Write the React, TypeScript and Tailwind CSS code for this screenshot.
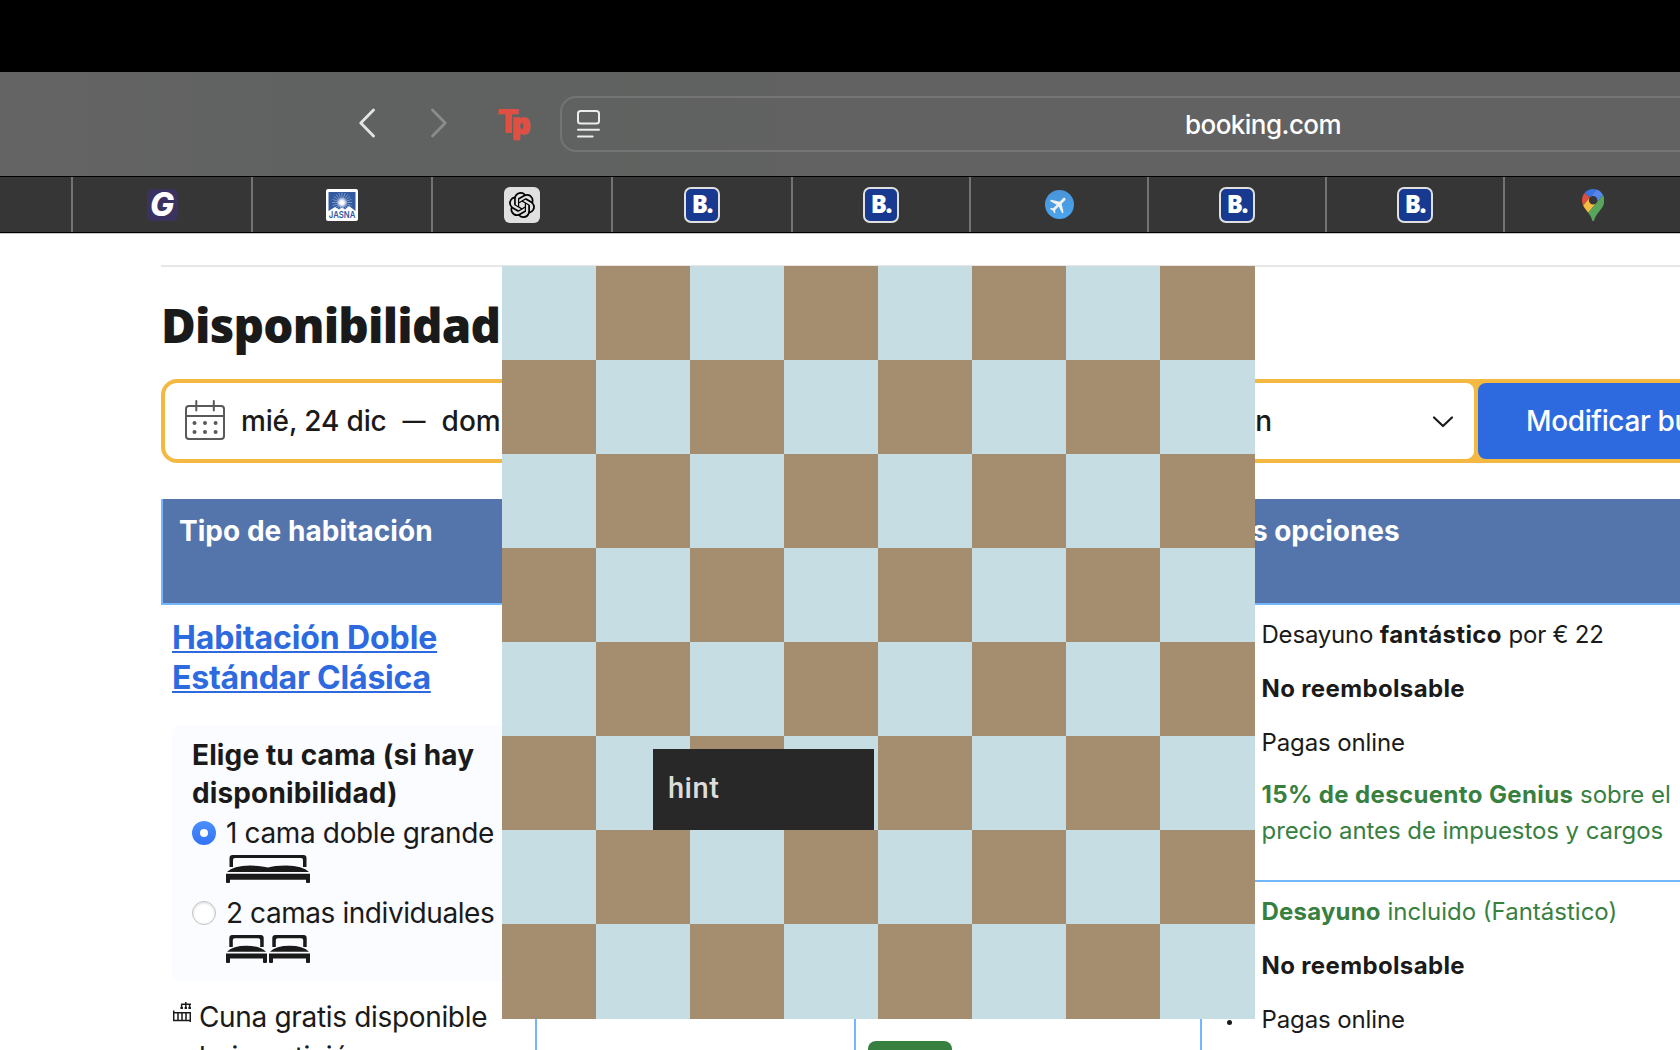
import React from "react";
import { MdFlight } from "react-icons/md";
import { SiOpenai } from "react-icons/si";

function BackArrow() {
  return (
    <svg className="mb-[2px] shrink-0" width="16" height="30" viewBox="0 0 16 30" fill="none" stroke="#e4e4e4" strokeWidth="2.8" strokeLinecap="round" strokeLinejoin="round">
      <path d="M14.5 2 L1.8 15 L14.5 28" />
    </svg>
  );
}

function ForwardArrow() {
  return (
    <svg width="16" height="30" viewBox="0 0 16 30" fill="none" stroke="#8a8b8a" strokeWidth="2.8" strokeLinecap="round" strokeLinejoin="round">
      <path d="M1.5 2 L14.2 15 L1.5 28" />
    </svg>
  );
}

function TpLogo() {
  return (
    <svg width="36" height="34" viewBox="0 0 36 34" fill="#e04f44" stroke="#e04f44" className="overflow-visible font-[Inter] font-black">
      <text x="0.4" y="25.8" fontSize="33" strokeWidth="0.2" textLength="21.5" lengthAdjust="spacingAndGlyphs">T</text>
      <text x="15.2" y="26.6" fontSize="28" strokeWidth="1.4">p</text>
    </svg>
  );
}

function ReaderIcon() {
  return (
    <svg className="shrink-0" width="23" height="28" viewBox="0 0 23 28" fill="none" stroke="#ececec" strokeWidth="2" strokeLinecap="round">
      <rect x="1" y="1" width="21" height="12.6" rx="2.6" />
      <path d="M1 19.8 H22 M1 26.4 H15.6" />
    </svg>
  );
}

function GIcon() {
  return (
    <span className="flex h-[32px] w-[31px] items-center justify-center rounded-md bg-[#3a335f]">
      <span className="font-[Inter] text-[32px] font-extrabold italic leading-none text-white">G</span>
    </span>
  );
}

function JasnaIcon() {
  const rays = Array.from({ length: 20 }, (_, i) => (i * Math.PI) / 10);
  return (
    <svg width="32" height="32" viewBox="0 0 32 32" className="overflow-visible">
      <defs>
        <radialGradient id="sun">
          <stop offset="0.3" stopColor="#ffffff" />
          <stop offset="1" stopColor="#ffffff" stopOpacity="0" />
        </radialGradient>
      </defs>
      <rect width="32" height="32" rx="2" fill="#ffffff" />
      <rect x="2.5" y="3" width="27" height="19" fill="#315aa0" />
      {rays.map((a) => (
        <line key={a} x1="16" y1="13.5" x2={16 + 10 * Math.cos(a)} y2={13.5 + 10 * Math.sin(a)} stroke="#c9d6ea" strokeWidth="0.5" />
      ))}
      <circle cx="16" cy="13.5" r="5.5" fill="url(#sun)" />
      <path d="M2.5 22 L9 18 L13 20.5 L16 18.5 L19 20.5 L23 17 L29.5 22 V30 H2.5 Z" fill="#ffffff" />
      <text x="2.8" y="28.6" fontSize="9.5" fontWeight="600" textLength="26.5" lengthAdjust="spacingAndGlyphs" fill="#315aa0" className="font-[Inter]">
        JASNA
      </text>
    </svg>
  );
}

function OpenAiIcon() {
  return (
    <span className="flex size-9 items-center justify-center rounded-md bg-[#e0e0e0] text-black">
      <SiOpenai size={26} />
    </span>
  );
}

function BookingIcon() {
  return (
    <span className="flex size-9 items-center justify-center rounded-[7px] border-2 border-[#e0e0e0] bg-[#17398f]">
      <span className="mb-[2px] font-['Open_Sans'] text-[24px] font-extrabold leading-none tracking-[-1.2px] text-white">B.</span>
    </span>
  );
}

function PlaneIcon() {
  return (
    <span className="flex size-[29px] items-center justify-center rounded-full bg-linear-to-b from-[#4a94d8] to-[#4aa5ee] text-[#f1f1f1]">
      <MdFlight size={22} className="rotate-45" />
    </span>
  );
}

function MapsIcon() {
  return (
    <svg width="22.3" height="32" viewBox="0 0 92.3 132.3">
      <path fill="#3a74e0" d="M60.2 2.2C55.8.8 51 0 46.1 0 32 0 19.3 6.4 10.8 16.5l21.8 18.3L60.2 2.2z" />
      <path fill="#db4f41" d="M10.8 16.5C4.1 24.5 0 34.9 0 46.1c0 8.7 1.7 15.7 4.6 22l28-33.3-21.8-18.3z" />
      <path fill="#5586ec" d="M46.2 28.5c9.8 0 17.7 7.9 17.7 17.7 0 4.3-1.6 8.3-4.2 11.4 0 0 13.9-16.6 27.5-32.7-5.6-10.8-15.3-19-27-22.7L32.6 34.8c3.3-3.8 8.1-6.3 13.6-6.3" />
      <path fill="#f5bd42" d="M46.2 63.8c-9.8 0-17.7-7.9-17.7-17.7 0-4.3 1.5-8.3 4.1-11.3l-28 33.3c4.8 10.6 12.8 19.2 21 29.9l34.1-40.5c-3.3 3.9-8.1 6.3-13.5 6.3" />
      <path fill="#58a55c" d="M59.1 109.2c15.4-24.1 33.3-35 33.3-63 0-7.7-1.9-14.9-5.2-21.3L25.6 98c2.6 3.4 5.3 7.3 7.9 11.3 9.4 14.5 6.8 23.1 12.8 23.1s3.4-8.7 12.8-23.2" />
    </svg>
  );
}

function CalendarIcon() {
  return (
    <svg className="mb-[2px] shrink-0" width="40" height="40" viewBox="0 0 40 40" fill="none" stroke="#595959" strokeWidth="2" strokeLinecap="round">
      <rect x="1" y="6" width="38" height="33" rx="3" />
      <path d="M1 16 H39 M11.3 1 V10.5 M28.8 1 V10.5" />
      <g fill="#595959" stroke="none">
        <circle cx="9.5" cy="23" r="2" />
        <circle cx="20" cy="23" r="2" />
        <circle cx="30.6" cy="23" r="2" />
        <circle cx="9.5" cy="32" r="2" />
        <circle cx="20" cy="32" r="2" />
        <circle cx="30.6" cy="32" r="2" />
      </g>
    </svg>
  );
}

function DoubleBed() {
  return (
    <svg width="84" height="28" viewBox="0 0 84 28" fill="#1a1a1a">
      <path d="M3.5 12 V3 Q3.5 0 6.5 0 H77.5 Q80.5 0 80.5 3 V12 H77 V5 Q77 3 75 3 H9 Q7 3 7 5 V12 Z" />
      <path d="M1 17 Q7 11 24 10.6 Q36 10.6 42 12.6 Q48 10.6 60 10.6 Q77 11 83 17 Z" />
      <path d="M0 18.7 H84 V27 Q84 28 83 28 H81 Q80 28 80 27 V24.8 H4 V27 Q4 28 3 28 H1 Q0 28 0 27 Z" />
    </svg>
  );
}

function SingleBed() {
  return (
    <svg width="41" height="28" viewBox="0 0 41 28" fill="#1a1a1a">
      <path d="M3.3 12 V3 Q3.3 0 6.3 0 H34.7 Q37.7 0 37.7 3 V12 H34.2 V5 Q34.2 3.2 32.2 3.2 H8.8 Q6.8 3.2 6.8 5 V12 Z" />
      <path d="M1 16.7 Q7 10.8 20.5 10.8 Q34 10.8 40 16.7 Z" />
      <path d="M0 18.5 H41 V27 Q41 28 40 28 H38 Q37 28 37 27 V23.6 H4 V27 Q4 28 3 28 H1 Q0 28 0 27 Z" />
    </svg>
  );
}

function CribIcon() {
  return (
    <svg width="18" height="20" viewBox="0 0 18 20" fill="none" stroke="#1a1a1a" strokeWidth="1.5">
      <path d="M0.7 8.5 V18.4 M0 10.8 H18 M0 18.4 H18 M5 11 V18 M9 11 V18 M13 11 V18 M17.3 11 V20" />
      <path d="M8 2.2 H18 M12.8 0 V6 M8.6 2.4 V5 M16.6 2.4 V5" />
      <path d="M7.4 6 H10 M11.6 6 H14 M15.4 6 H18" strokeWidth="2" />
    </svg>
  );
}

function TabCell({ children, className }: { children?: React.ReactNode; className: string }) {
  return (
    <div className={`flex shrink-0 items-center justify-center border-r-2 border-[#737373] ${className}`}>{children}</div>
  );
}

function BedOption({ label, checked, icon, tracking }: { label: string; checked: boolean; icon: React.ReactNode; tracking: string }) {
  return (
    <div className="flex h-20 gap-[10px]">
      {checked ? (
        <span className="mt-2 flex size-6 shrink-0 items-center justify-center rounded-full bg-linear-to-b from-[#4a8ffb] to-[#3273f6]">
          <span className="size-2 rounded-full bg-white" />
        </span>
      ) : (
        <span className="mt-2 size-6 shrink-0 rounded-full border border-[#c2c2c4] bg-white shadow-[inset_0_1px_3px_rgba(0,0,0,0.15)]" />
      )}
      <div className="flex flex-col">
        <span className={`whitespace-nowrap text-[28px] leading-10 ${tracking}`}>{label}</span>
        <span className="mt-[2px] flex gap-[2px]">{icon}</span>
      </div>
    </div>
  );
}

function Board() {
  const cells = Array.from({ length: 64 }, (_, i) => (Math.floor(i / 8) + (i % 8)) % 2 === 0);
  return (
    <div className="absolute left-[502px] top-[266px] grid h-[753px] w-[753px] grid-cols-[repeat(7,94px)_95px] grid-rows-[repeat(7,94px)_95px]">
      {cells.map((light, i) => (
        <div key={i} className={light ? "bg-[#c5dde3]" : "bg-[#a58e70]"} />
      ))}
      <div className="absolute left-[151px] top-[483px] flex h-[81px] w-[221px] items-center bg-[#282828] pl-[15px]">
        <span className="mb-[2px] font-[Roboto] text-[29px] font-medium leading-none tracking-[0.5px] text-[#dcdcdc]">hint</span>
      </div>
    </div>
  );
}

export default function App() {
  return (
    <div className="relative flex h-[1050px] w-[1680px] flex-col overflow-hidden bg-white font-[Inter,sans-serif] text-[#1a1a1a]">
      <div className="h-[72px] shrink-0 bg-black" />

      <div className="flex h-[104px] shrink-0 items-center bg-linear-to-r from-[#646464] via-[#5f6260] via-25% to-[#626262] to-60% pl-[359px]">
        <BackArrow />
        <span className="mb-[2px] ml-14 shrink-0">
          <ForwardArrow />
        </span>
        <span className="ml-[50px] shrink-0">
          <TpLogo />
        </span>
        <div className="ml-[27px] flex h-14 w-[1400px] shrink-0 items-center rounded-2xl border-2 border-[#747474] pl-[15px]">
          <ReaderIcon />
          <span className="ml-[585px] mt-[2px] text-[26px] font-medium leading-8 tracking-[-0.54px] text-white">booking.com</span>
        </div>
      </div>

      <div className="flex h-[57px] shrink-0 border-y border-black bg-[#363636]">
        <TabCell className="w-[73px]" />
        <TabCell className="w-[180px]"><GIcon /></TabCell>
        <TabCell className="w-[180px]"><JasnaIcon /></TabCell>
        <TabCell className="w-[180px]"><OpenAiIcon /></TabCell>
        <TabCell className="w-[180px]"><BookingIcon /></TabCell>
        <TabCell className="w-[178px]"><BookingIcon /></TabCell>
        <TabCell className="w-[178px]"><PlaneIcon /></TabCell>
        <TabCell className="w-[178px]"><BookingIcon /></TabCell>
        <TabCell className="w-[178px]"><BookingIcon /></TabCell>
        <TabCell className="w-[178px]"><MapsIcon /></TabCell>
      </div>

      <main className="flex w-[1700px] flex-1 flex-col border-t border-[#c9c9c9] pl-[161px] pt-[31px]">
        <div className="h-[2px] shrink-0 bg-[#e7e7e7]" />
        <h1 className="mt-[30px] font-['Open_Sans'] text-[47.5px] font-extrabold leading-[56px] tracking-[-0.8px]">Disponibilidad</h1>

        <div className="mt-[26px] flex h-[84px] w-[1700px] shrink-0 gap-1 rounded-2xl bg-[#f4b942] p-1 text-[28px] font-medium leading-9">
          <div className="flex w-[620px] shrink-0 items-center rounded-l-xl rounded-r-lg bg-white pl-5">
            <CalendarIcon />
            <span className="ml-[16px] tracking-[-0.15px]">mié, 24 dic</span>
            <span className="ml-[16px] text-[23px]">—</span>
            <span className="ml-[16px]">dom, 28 dic</span>
          </div>
          <div className="flex w-[685px] shrink-0 items-center justify-end rounded-lg bg-white pr-[20px]">
            <span>2 adultos · 0 niños · 1 habitación</span>
            <svg className="ml-[160px] mt-[2px]" width="22" height="14" viewBox="0 0 22 14" fill="none" stroke="#1a1a1a" strokeWidth="2.2" strokeLinecap="round" strokeLinejoin="round">
              <path d="M2 2.5 L11 11 L20 2.5" />
            </svg>
          </div>
          <button className="flex w-[360px] shrink-0 items-center rounded-lg bg-[#2d6adf] pl-[48px] tracking-[-0.37px] text-white">
            Modificar búsqueda
          </button>
        </div>

        <div className="mt-9 flex h-[106px] shrink-0 border-b-2 border-l-2 border-[#74b6ff] bg-[#5475ac] pt-[14px] text-[28px] font-bold leading-9 text-white">
          <div className="w-[1039px] shrink-0 pl-4 tracking-[0.04px]">Tipo de habitación</div>
          <div className="whitespace-nowrap pl-[16px] tracking-[-0.05px]">Tus opciones</div>
        </div>

        <div className="flex flex-1">
          <div className="flex w-[376px] shrink-0 flex-col border-r-2 border-[#74b6ff] pl-[11px] pt-[13px]">
            <a className="text-[32px] font-bold leading-10 tracking-[-0.12px] text-[#2d6adf] underline decoration-2 underline-offset-[2px]">
              Habitación Doble
              <br />
              <span className="tracking-[-0.22px]">Estándar Clásica</span>
            </a>
            <div className="mr-3 mt-[27px] flex h-64 shrink-0 flex-col rounded-lg bg-[#fbfcff] pl-5 pt-[11px]">
              <div className="mb-[1px] text-[28px] font-bold leading-[38px] tracking-[0.13px]">
                Elige tu cama (si hay
                <br />
                disponibilidad)
              </div>
              <BedOption label="1 cama doble grande" checked icon={<DoubleBed />} tracking="tracking-[-0.36px]" />
              <BedOption
                label="2 camas individuales"
                checked={false}
                icon={
                  <>
                    <SingleBed />
                    <SingleBed />
                  </>
                }
                tracking="tracking-[-0.43px]"
              />
            </div>
            <div className="mt-4 flex text-[28px] leading-10 tracking-[-0.33px]">
              <span className="mr-2 mt-[5px] pl-px">
                <CribIcon />
              </span>
              <span>
                Cuna gratis disponible
                <br />
                bajo petición
              </span>
            </div>
          </div>

          <div className="w-[319px] shrink-0 border-r-2 border-[#74b6ff]" />

          <div className="flex w-[346px] shrink-0 flex-col border-r-2 border-[#74b6ff] pl-3 pt-[436px]">
            <div className="h-10 w-[84px] rounded-lg bg-[#38803f]" />
          </div>

          <div className="flex flex-1 flex-col whitespace-nowrap text-[24px] leading-9">
            <div className="flex h-[277px] flex-col border-b-2 border-[#74b6ff] pl-[59.5px] pt-[12px]">
              <p className="tracking-[-0.2px]">
                Desayuno <b className="tracking-[0.37px]">fantástico</b> por € 22
              </p>
              <p className="mt-[18px] font-bold tracking-[0.36px]">No reembolsable</p>
              <p className="mt-[18px] tracking-[-0.12px]">Pagas online</p>
              <p className="mt-4 text-[#38803f]">
                <b className="tracking-[0.38px]">15% de descuento Genius</b> <span className="tracking-[-0.05px]">sobre el</span>
                <br />
                <span className="tracking-[-0.07px]">precio antes de impuestos y cargos</span>
              </p>
            </div>
            <div className="flex flex-col pl-[59.5px] pt-[12px]">
              <p className="text-[#38803f]">
                <b className="tracking-[0.2px]">Desayuno</b> <span>incluido (Fantástico)</span>
              </p>
              <p className="mt-[18px] font-bold tracking-[0.36px]">No reembolsable</p>
              <p className="-ml-[35px] mt-[18px] flex items-center tracking-[-0.12px]">
                <span className="mr-[30px] mt-[5px] size-[5px] rounded-full bg-[#1a1a1a]" />
                Pagas online
              </p>
            </div>
          </div>
        </div>
      </main>

      <Board />
    </div>
  );
}
